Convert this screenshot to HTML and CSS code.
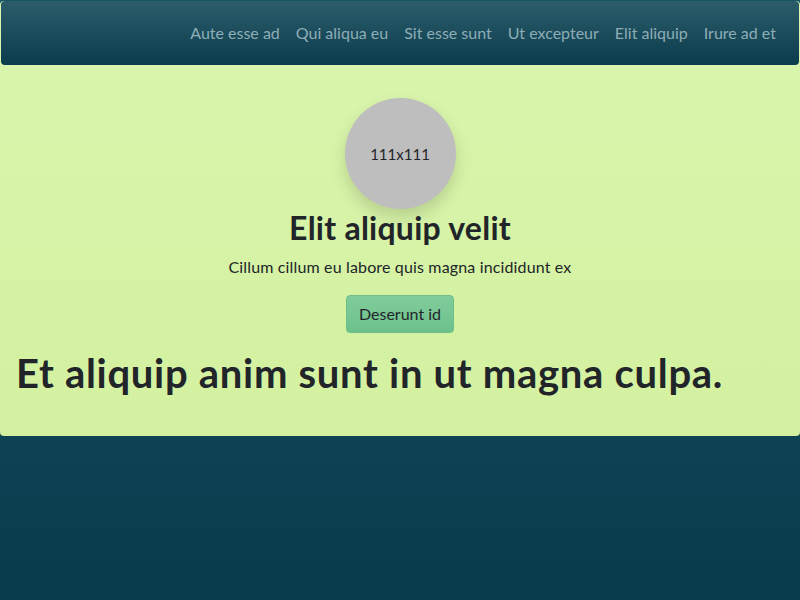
FILE: index.html
```html
<!DOCTYPE html>
<html lang="la">
<head>
<meta charset="utf-8">
<title>Elit aliquip velit</title>
<link rel="stylesheet" href="styles.css">
</head>
<body>
<div class="page">
  <nav class="navbar">
    <ul class="nav-links">
      <li><a href="#">Aute esse ad</a></li>
      <li><a href="#">Qui aliqua eu</a></li>
      <li><a href="#">Sit esse sunt</a></li>
      <li><a href="#">Ut excepteur</a></li>
      <li><a href="#">Elit aliquip</a></li>
      <li><a href="#">Irure ad et</a></li>
    </ul>
  </nav>
  <main class="content">
    <section class="hero">
      <div class="avatar">111x111</div>
      <h2 class="hero-title">Elit aliquip velit</h2>
      <p class="hero-text">Cillum cillum eu labore quis magna incididunt ex</p>
      <button class="btn" type="button">Deserunt id</button>
    </section>
    <h1 class="headline">Et aliquip anim sunt in ut magna culpa.</h1>
  </main>
</div>
</body>
</html>
```
FILE: styles.css
```css
html {
  min-height: 100%;
  background: linear-gradient(180deg, #1a5566 0%, #083c4d 100%);
}
body {
  margin: 0;
  font-family: Lato, "Noto Sans", sans-serif;
  color: #212529;
}
.page {
  background: linear-gradient(180deg, #daf5ae 0%, #d3f1a0 100%);
  border-radius: 4px;
}
.navbar {
  height: 64px;
  margin: 1px 1px 0 1px;
  padding: 0 15px 0 17px;
  display: flex;
  align-items: center;
  justify-content: flex-end;
  background: linear-gradient(180deg, #2c5c6a 0%, #0a3c4e 100%);
  border-radius: 4px;
}
.nav-links {
  list-style: none;
  margin: 0;
  padding: 0;
  display: flex;
}
.nav-links a {
  display: block;
  padding: 8px 8px;
  font-size: 16px;
  line-height: 24px;
  color: #8eadb6;
  text-decoration: none;
}
.content {
  padding: 33px 16px 31px;
}
.hero {
  display: flex;
  flex-direction: column;
  align-items: center;
  text-align: center;
}
.avatar {
  width: 111px;
  height: 111px;
  border-radius: 50%;
  background: #bebebe;
  box-shadow: 0 8px 16px rgba(0, 0, 0, 0.15);
  display: flex;
  align-items: center;
  justify-content: center;
  font-size: 15px;
  color: #212529;
}
.hero-title {
  margin: 0 0 8px;
  font-size: 32px;
  font-weight: 700;
  line-height: 1.2;
  letter-spacing: 0.25px;
}
.hero-text {
  margin: 0 0 16px;
  font-size: 16px;
  line-height: 24px;
  letter-spacing: 0.15px;
}
.btn {
  font-family: inherit;
  font-size: 16px;
  line-height: 24px;
  color: #212529;
  padding: 6px 12px;
  border: 1px solid #6cbf89;
  border-radius: 4px;
  background: linear-gradient(180deg, #82cc9c 0%, #6cc18b 100%);
  cursor: pointer;
}
.headline {
  margin: 16px 0 8px;
  font-size: 40px;
  font-weight: 700;
  line-height: 1.2;
  letter-spacing: 0.7px;
}
```
